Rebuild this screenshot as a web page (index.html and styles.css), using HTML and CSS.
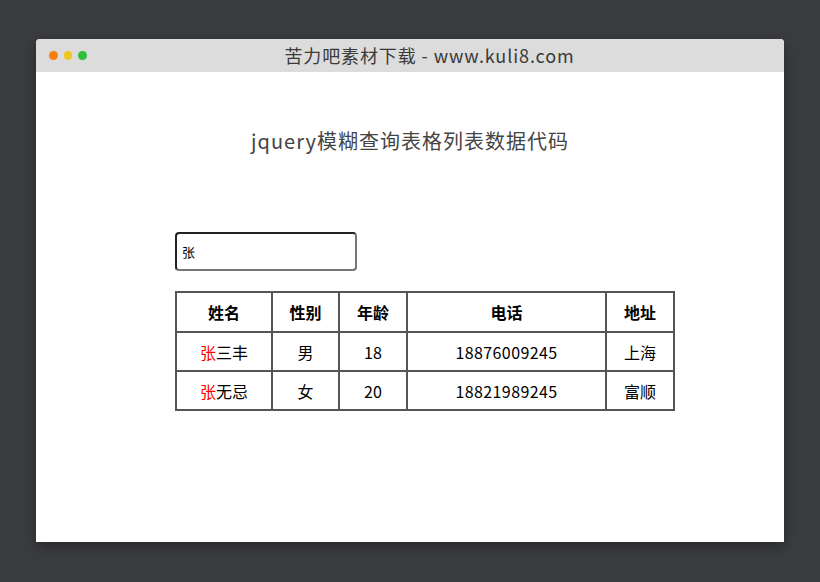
FILE: index.html
```html
<!DOCTYPE html>
<html lang="zh">
<head>
<meta charset="utf-8">
<title>jquery模糊查询表格列表数据代码</title>
<link rel="stylesheet" href="styles.css">
</head>
<body>
<div class="window">
  <div class="titlebar">
    <div class="dots">
      <span class="dot orange"></span>
      <span class="dot yellow"></span>
      <span class="dot green"></span>
    </div>
    <div class="title">苦力吧素材下载 - www.kuli8.com</div>
  </div>
  <div class="content">
    <h1 class="heading">jquery模糊查询表格列表数据代码</h1>
    <div class="main">
      <input class="search" type="text" value="张">
      <table class="data">
        <thead>
          <tr>
            <th class="c-name">姓名</th>
            <th class="c-sex">性别</th>
            <th class="c-age">年龄</th>
            <th class="c-tel">电话</th>
            <th class="c-addr">地址</th>
          </tr>
        </thead>
        <tbody>
          <tr>
            <td><span class="hl">张</span>三丰</td>
            <td>男</td>
            <td>18</td>
            <td class="num">18876009245</td>
            <td>上海</td>
          </tr>
          <tr>
            <td><span class="hl">张</span>无忌</td>
            <td>女</td>
            <td>20</td>
            <td class="num">18821989245</td>
            <td>富顺</td>
          </tr>
        </tbody>
      </table>
    </div>
  </div>
</div>
</body>
</html>
```
FILE: styles.css
```css
html, body {
  margin: 0;
  padding: 0;
}
body {
  background: #3b3c3e;
  width: 820px;
  height: 582px;
  overflow: hidden;
  font-family: "Noto Sans CJK SC", "Noto Sans", sans-serif;
}
.window {
  margin: 39px 0 0 36px;
  width: 748px;
  height: 503px;
  background: #ffffff;
  border-radius: 4px 4px 0 0;
  box-shadow: 0 4px 14px rgba(0, 0, 0, 0.35);
  display: flex;
  flex-direction: column;
  overflow: hidden;
}
.titlebar {
  height: 33px;
  background: #dcdcdc;
  display: flex;
  align-items: center;
  padding: 0 0 0 13px;
}
.dots {
  display: flex;
  gap: 6px;
  width: 38px;
}
.dot {
  width: 9px;
  height: 9px;
  border-radius: 50%;
  display: block;
}
.orange { background: #fb7f0c; }
.yellow { background: #f0c520; }
.green { background: #2fbf3d; }
.title {
  flex: 1;
  text-align: center;
  font-size: 18px;
  letter-spacing: 0.9px;
  color: #3a3a3a;
  padding-right: 12px;
  line-height: 33px;
}
.content {
  flex: 1;
  padding-top: 54px;
}
.heading {
  margin: 0;
  font-size: 20px;
  line-height: 30px;
  letter-spacing: 1px;
  font-weight: normal;
  color: #444;
  text-align: center;
}
.main {
  padding: 76px 0 0 139px;
  display: flex;
  flex-direction: column;
  align-items: flex-start;
  gap: 20px;
}
.search {
  box-sizing: border-box;
  width: 182px;
  height: 39px;
  margin: 0;
  padding: 0 5px;
  border: 2px solid;
  border-color: #222 #777 #777 #222;
  border-radius: 4px;
  font-family: "Noto Sans CJK SC", sans-serif;
  font-size: 13px;
  color: #000;
  outline: none;
  background: #fff;
}
.data {
  border-collapse: collapse;
  table-layout: fixed;
  width: 498px;
  font-size: 16px;
  color: #000;
}
.data th, .data td {
  border: 2px solid #555;
  text-align: center;
  padding: 0;
}
.data th {
  height: 38px;
  font-weight: bold;
}
.data td {
  height: 37px;
}
.data td.num {
  letter-spacing: 0.4px;
}
.c-name { width: 94px; }
.c-sex { width: 65px; }
.c-age { width: 66px; }
.c-tel { width: 197px; }
.c-addr { width: 66px; }
.hl { color: #ff0000; }
```
